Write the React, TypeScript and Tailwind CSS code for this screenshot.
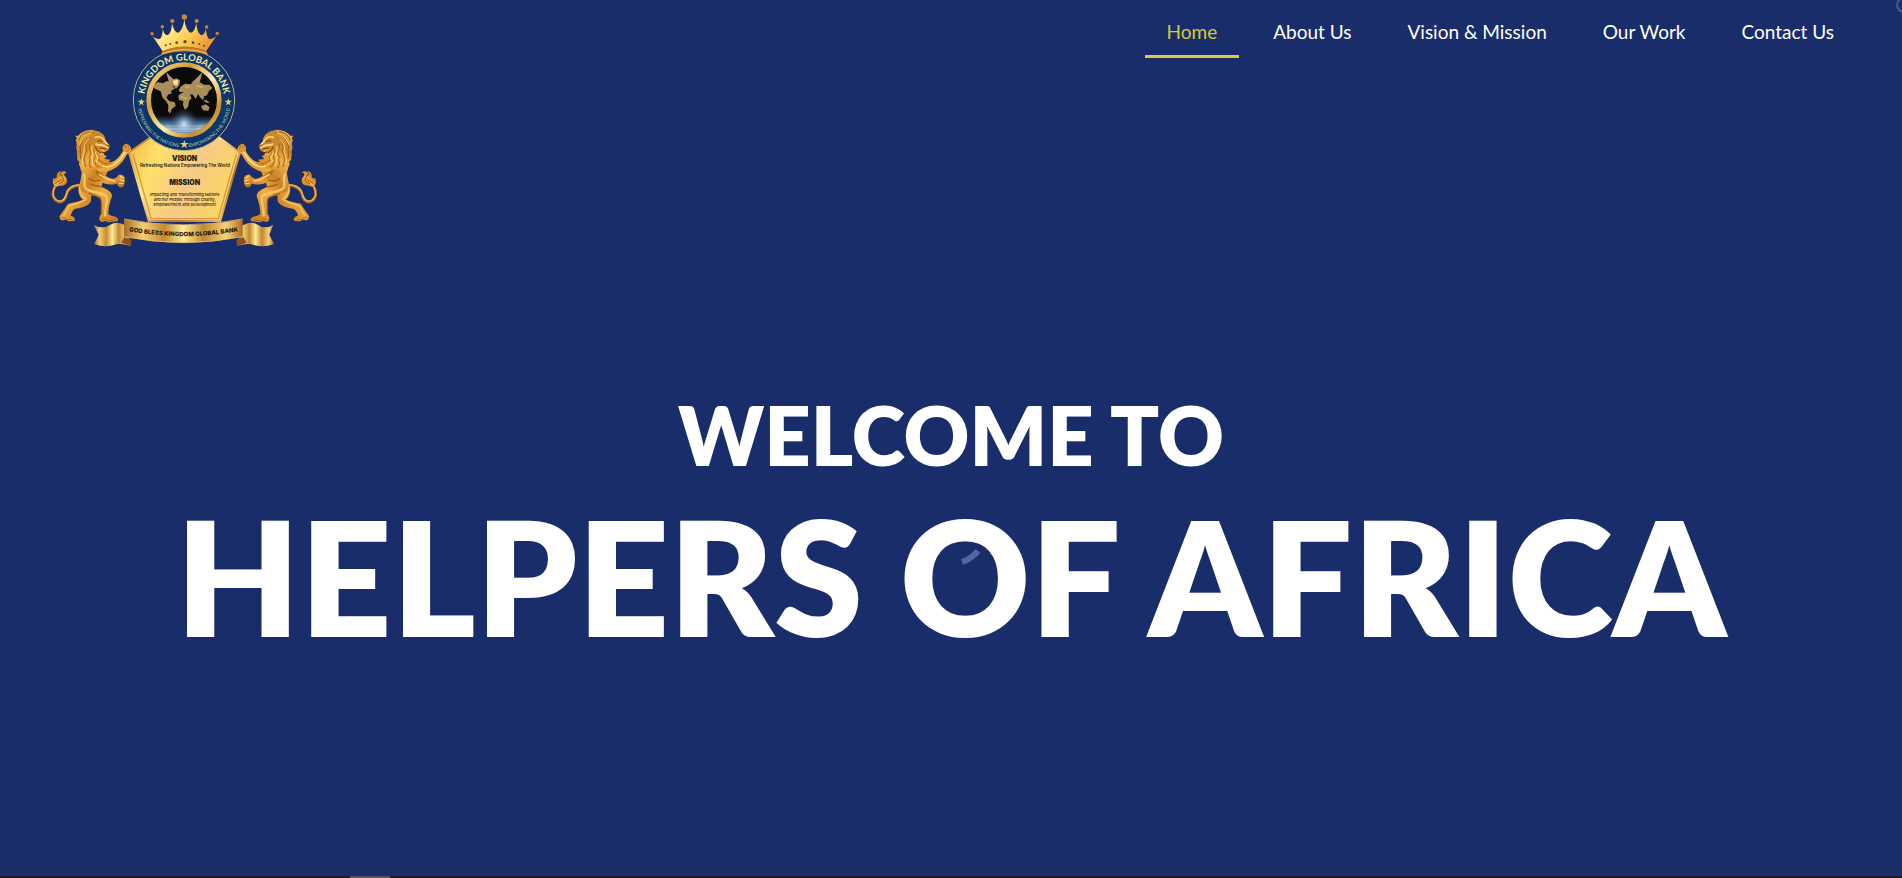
const links = ['Home', 'About Us', 'Vision & Mission', 'Our Work', 'Contact Us'];

function Lion() {
  return (
    <g strokeLinejoin="round" strokeLinecap="round">
      <path d="M108 196C82 196 68 207 64 226C60 244 46 250 35 243C20 233 22 215 29 201" fill="none" stroke="#b8721c" strokeWidth="8" />
      <path d="M108 194C82 194 67 206 63 225C58 242 46 247 35 240C22 231 23 214 29 201" fill="none" stroke="#eeb95f" strokeWidth="4" />
      <path d="M34 201C24 196 20 184 26 173C29 177 32 176 36 172C33 164 38 156 47 152L45 158C53 152 61 152 65 158C58 158 55 163 61 170C69 178 67 190 58 195C50 199 43 195 34 201Z" fill="url(#fur)" />
      <path d="M32 190C38 180 44 188 48 178M44 190C55 186 58 180 52 170M46 160C42 166 49 168 52 166" fill="none" stroke="#8e4d12" strokeWidth="3" />
      <path d="M104 190C96 210 101 228 113 239C99 246 81 248 69 251C61 262 55 274 48 282C40 289 44 301 54 301L64 299L70 304L88 303C93 296 86 288 77 287C79 278 84 271 89 267C110 265 132 257 138 244L140 205Z" fill="url(#furDark)" />
      <path d="M106 193C100 217 110 230 123 237M120 240C101 251 88 252 73 257C67 267 61 279 56 286" fill="none" stroke="#f7c868" strokeWidth="4" />
      <path d="M107 143C116 165 101 184 105 202C111 224 142 226 165 232C171 245 169 263 169 281C161 290 161 303 171 306L181 303L190 307L217 304C224 297 215 290 201 288L190 283C190 260 196 243 201 229C202 216 185 207 170 201C172 184 184 168 189 151L188 120L125 130Z" fill="url(#fur)" />
      <path d="M117 163C124 182 111 198 124 207C143 220 176 215 185 230C190 246 178 263 180 286" fill="none" stroke="#fbd576" strokeWidth="7" opacity=".75" />
      <path d="M132 176C146 188 157 180 167 181M139 193C151 199 160 197 169 201M132 220C151 225 158 230 166 234C172 246 168 264 169 281" fill="none" stroke="#a35c17" strokeWidth="4" />
      <path d="M150 151C166 155 181 169 196 175C206 179 213 174 218 169C222 160 232 164 238 170C241 182 240 195 232 202C224 204 218 198 216 191C197 196 180 194 167 184Z" fill="url(#furDark)" />
      <path d="M163 163C180 174 193 182 210 183M226 169L235 175M225 179L236 183M224 190L234 191" fill="none" stroke="#ffd16d" strokeWidth="4" />
      <path d="M160 124C178 133 194 129 208 123C220 115 228 103 234 92C230 81 236 70 246 71C257 76 261 87 256 94C249 98 245 105 240 113C231 129 219 140 204 148C187 159 169 158 157 151Z" fill="url(#fur)" />
      <path d="M171 136C191 146 211 133 223 121C231 112 236 104 241 94" fill="none" stroke="#ffdc83" strokeWidth="5" />
      <path d="M239 77L246 87M248 75L253 88M236 91C241 96 247 93 252 92" fill="none" stroke="#995315" strokeWidth="2" />
      <path d="M98 48C88 43 92 49 96 55C88 61 97 65 95 75C91 87 99 93 95 104C100 111 92 120 104 125C97 133 109 139 107 152L116 143C117 153 125 151 128 157C131 146 139 153 144 147C150 154 158 151 160 142C170 151 177 145 174 136C187 139 201 137 204 126L190 127L197 119L178 117L186 108C178 107 174 101 178 96C187 94 192 86 194 78L182 66C183 48 169 33 151 32C137 26 114 31 98 48Z" fill="url(#fur)" />
      <path d="M148 47C159 43 171 45 179 53L182 66L193 77C194 88 188 93 180 95L180 87L169 84L168 96C158 101 148 90 147 78L137 70C136 60 139 52 148 47Z" fill="#ca892f" />
      <path d="M151 52C162 48 173 53 178 62L190 76M153 72C161 79 171 72 181 79L188 82" fill="none" stroke="#ffd474" strokeWidth="5" />
      <path d="M158 64C163 60 169 62 172 66M185 75L193 79M167 84L181 87M170 96L181 99M151 80C155 87 156 94 167 98" fill="none" stroke="#643008" strokeWidth="3" />
      <path d="M133 35C110 39 107 48 101 60M146 37C124 43 114 56 105 80C109 91 103 99 107 116M137 53C119 69 119 77 126 91C121 104 112 111 122 140M134 73C129 90 146 97 132 112C140 122 127 128 137 143M147 87C143 101 158 106 145 121C155 127 148 139 160 140M156 98C161 110 168 104 160 122C176 124 169 131 188 132" fill="none" stroke="#a36018" strokeWidth="3" />
      <path d="M139 39C119 47 111 58 104 73M132 57C115 74 119 81 116 94C120 105 107 111 114 132M140 80C137 98 149 102 139 113C148 123 136 129 147 139M151 98C151 109 166 108 153 125C164 127 160 135 177 139" fill="none" stroke="#ffe08b" strokeWidth="3" opacity=".85" />
      <path d="M49 294L61 294M60 299L78 298M171 298L186 297M188 302L207 301" fill="none" stroke="#995316" strokeWidth="2" />
    </g>
  );
}

function Star({ at }: { at: string }) {
  return <path transform={at} d="M0-13L3-4L13-4L5 2L8 12L0 6L-8 12L-5 2L-13-4L-3-4Z" fill="#f3ca64" />;
}

function Crest() {
  return (
    <svg viewBox="0 0 870 780" className="block h-[260px] w-[290px]" role="img" aria-label="Kingdom Global Bank">
      <defs>
        <linearGradient id="fur" x1="0" y1="0" x2=".8" y2="1">
          <stop offset="0" stopColor="#f5c25a" />
          <stop offset=".35" stopColor="#c98224" />
          <stop offset=".6" stopColor="#f0ae42" />
          <stop offset="1" stopColor="#cf811f" />
        </linearGradient>
        <linearGradient id="furDark" x1="0" y1="0" x2="1" y2="1">
          <stop offset="0" stopColor="#9c5716" />
          <stop offset=".5" stopColor="#e5a23b" />
          <stop offset="1" stopColor="#ad661b" />
        </linearGradient>
        <linearGradient id="shield" x1="0" y1="0" x2="1" y2=".35">
          <stop offset="0" stopColor="#f2b744" />
          <stop offset=".3" stopColor="#ffe06a" />
          <stop offset=".65" stopColor="#f8c987" />
          <stop offset="1" stopColor="#fbd663" />
        </linearGradient>
        <linearGradient id="edge" x1="0" y1="0" x2="1" y2="1">
          <stop offset="0" stopColor="#c1711c" />
          <stop offset=".4" stopColor="#fff0a1" />
          <stop offset=".7" stopColor="#b96f2b" />
          <stop offset="1" stopColor="#f8d262" />
        </linearGradient>
        <linearGradient id="ring" x1="0" y1="0" x2="1" y2="1">
          <stop offset="0" stopColor="#fbe38a" />
          <stop offset=".3" stopColor="#d79b35" />
          <stop offset=".55" stopColor="#fff0b0" />
          <stop offset=".8" stopColor="#c98a30" />
          <stop offset="1" stopColor="#f8d876" />
        </linearGradient>
        <linearGradient id="band">
          <stop offset="0" stopColor="#a96a20" />
          <stop offset=".16" stopColor="#f3cf79" />
          <stop offset=".34" stopColor="#c58b2e" />
          <stop offset=".5" stopColor="#ffec98" />
          <stop offset=".67" stopColor="#c18830" />
          <stop offset=".86" stopColor="#f7d27b" />
          <stop offset="1" stopColor="#ad6b21" />
        </linearGradient>
        <linearGradient id="crown" x1="0" y1="0" x2="1" y2=".4">
          <stop offset="0" stopColor="#d99b2d" />
          <stop offset=".35" stopColor="#ffe88a" />
          <stop offset=".7" stopColor="#fbcb4c" />
          <stop offset="1" stopColor="#ec9a3a" />
        </linearGradient>
        <linearGradient id="sea" x1="0" y1="0" x2="0" y2="1">
          <stop offset="0" stopColor="#26394d" stopOpacity="0" />
          <stop offset=".4" stopColor="#3f6488" />
          <stop offset=".75" stopColor="#a9c6da" />
          <stop offset="1" stopColor="#6f93ae" />
        </linearGradient>
        <radialGradient id="glow">
          <stop offset="0" stopColor="#d8efff" stopOpacity=".9" />
          <stop offset=".4" stopColor="#7fa6c6" stopOpacity=".6" />
          <stop offset="1" stopColor="#20384f" stopOpacity="0" />
        </radialGradient>
        <clipPath id="globe"><circle cx="432" cy="300" r="100" /></clipPath>
        <path id="upper" d="M312 301A120 120 0 0 1 552 301" />
        <path id="lower" d="M292 302A140 140 0 0 0 572 302" />
      </defs>

      <path d="M267 458L342 405H527L600 458L541 663H326Z" fill="url(#shield)" stroke="url(#edge)" strokeWidth="6" />
      <path d="M279 463L333 654M589 463L535 654M330 656H537" stroke="#bc7935" strokeWidth="4" opacity=".65" />

      <circle cx="432" cy="300" r="152" fill="#0b376c" stroke="#b7bd91" strokeWidth="3" />
      <circle cx="432" cy="300" r="147" fill="none" stroke="#142f5d" strokeWidth="4" />
      <circle cx="432" cy="300" r="106" fill="#0b0a0b" stroke="url(#ring)" strokeWidth="14" />
      <g clipPath="url(#globe)">
        <rect x="332" y="345" width="200" height="56" fill="url(#sea)" />
        <ellipse cx="432" cy="372" rx="46" ry="48" fill="url(#glow)" />
        <path d="M350 378H514M362 387H502M376 394H488" stroke="#e4f3fb" strokeWidth="2" opacity=".5" />
        <path d="M378 216L412 250L392 263ZM488 216L454 250L474 263Z" fill="#ffc39b" opacity=".7" />
        <path d="M337 262L353 246L369 250L380 243L396 246L393 257L405 265L393 273L395 281L385 283L379 293L388 303L404 307L407 317L395 328L390 341L384 333L385 316L378 304L367 292L362 274L348 268ZM393 240L410 235L420 241L418 256L408 266L399 257ZM420 276L416 270L423 259L435 251L451 253L464 245L480 247L492 254L508 254L518 264L507 272L501 286L492 289L489 301L480 292L474 282L467 297L459 284L450 283L455 295L447 303L445 319L435 330L429 315L430 303L417 300L415 287L421 281L432 277ZM483 319L497 313L509 322L505 332L489 331ZM489 302L502 309L509 308L499 300Z" fill="#a88e5a" />
        <path d="M398 242L414 239L412 256L402 254Z" fill="#ffe69a" />
        <path d="M435 263L448 259M468 257L490 262M423 290L441 296" fill="none" stroke="#d9bd78" strokeWidth="5" opacity=".65" />
      </g>
      <text fill="#f4e7a0" fontSize="28" fontWeight="700" fontFamily="Lato, sans-serif" textAnchor="middle">
        <textPath href="#upper" startOffset="50%">KINGDOM GLOBAL BANK</textPath>
      </text>
      <text fill="#b9c9ac" fontSize="14" fontFamily="Lato, sans-serif" textAnchor="middle">
        <textPath href="#lower" startOffset="26%">REFRESHING THE NATIONS</textPath>
      </text>
      <text fill="#b9c9ac" fontSize="14" fontFamily="Lato, sans-serif" textAnchor="middle">
        <textPath href="#lower" startOffset="74%">EMPOWERING THE WORLD</textPath>
      </text>
      <Star at="translate(304 306) scale(.85)" />
      <Star at="translate(565 306) scale(.85)" />
      <Star at="translate(433 433)" />

      <path d="M335 104Q345 118 360 117Q368 108 368 86Q373 107 384 105Q395 98 396 70Q403 100 415 98Q429 90 433 58Q437 90 451 98Q463 100 469 70Q471 98 482 105Q493 107 498 86Q499 108 507 117Q521 118 532 104L498 154Q433 127 368 154Z" fill="url(#crown)" />
      <path d="M368 153Q433 127 498 153L505 166Q433 143 362 166Z" fill="#c37b2a" />
      <path d="M366 161Q433 137 502 160" fill="none" stroke="#f5ca68" strokeWidth="3" />
      <g fill="#c88b3c">
        <circle cx="336" cy="101" r="5" /><circle cx="367" cy="80" r="5" /><circle cx="397" cy="63" r="6" />
        <circle cx="433" cy="51" r="8" /><circle cx="470" cy="63" r="6" /><circle cx="500" cy="81" r="5" /><circle cx="532" cy="100" r="5" />
      </g>
      <g fill="#5e4930">
        <circle cx="377" cy="136" r="3" /><circle cx="391" cy="132" r="3" /><circle cx="410" cy="128" r="4" />
        <circle cx="435" cy="125" r="5" /><circle cx="459" cy="128" r="4" /><circle cx="478" cy="132" r="3" /><circle cx="492" cy="137" r="3" />
      </g>

      <g fill="#241a0c" fontFamily="Inter, sans-serif" textAnchor="middle">
        <text x="434" y="482" fontSize="21" fontWeight="900">VISION</text>
        <text x="435" y="502" fontSize="13" fontWeight="600">Refreshing Nations Empowering The World</text>
        <text x="434" y="555" fontSize="21" fontWeight="900">MISSION</text>
        <g fontSize="12" fontWeight="500">
          <text x="434" y="587">Impacting and Transforming Nations</text>
          <text x="434" y="602">and her People Through Charity,</text>
          <text x="434" y="617">Empowerment and Development</text>
        </g>
      </g>

      <g transform="translate(15 360)"><Lion /></g>
      <g transform="translate(851 360) scale(-1 1)"><Lion /></g>

      <path d="M161 674Q187 690 211 674Q231 661 256 676L273 738Q240 727 218 736Q190 743 163 732L176 704Z" fill="url(#band)" />
      <path d="M700 674Q676 690 653 674Q632 661 608 676L591 738Q623 727 645 736Q673 743 702 732L688 704Z" fill="url(#band)" />
      <path d="M253 711L274 719L273 738L244 728ZM610 711L589 719L591 738L620 728Z" fill="#8e5118" />
      <path d="M252 657Q432 692 608 657V710Q432 746 252 710Z" fill="url(#band)" />
      <path d="M252 657Q432 692 608 657M252 710Q432 746 608 710" fill="none" stroke="#efc466" strokeWidth="2" />
      <path id="ribbon" d="M254 691Q432 726 608 691" fill="none" />
      <text fill="#241704" fontSize="18" fontWeight="800" fontFamily="Inter, sans-serif" textAnchor="middle">
        <textPath href="#ribbon" startOffset="50%">GOD BLESS KINGDOM GLOBAL BANK</textPath>
      </text>
    </svg>
  );
}

export default function App() {
  return (
    <div className="relative flex min-h-screen flex-col overflow-hidden bg-[#1a2d6b] font-['Lato',sans-serif] text-white">
      <header className="flex items-start justify-between pr-[46px] pl-10">
        <a href="#home"><Crest /></a>
        <nav aria-label="Main" className="flex gap-3">
          {links.map((label, i) => (
            <a
              key={label}
              href="#home"
              aria-current={i === 0 ? 'page' : undefined}
              className={
                i === 0
                  ? 'border-b-3 border-[#d9cb44] px-[22px] pt-5 pb-[11px] text-[19px] leading-6 text-[#d6cb38]'
                  : 'border-b-3 border-transparent px-[22px] pt-5 pb-[11px] text-[19px] leading-6'
              }
            >
              {label}
            </a>
          ))}
        </nav>
      </header>

      <main className="flex grow flex-col items-center pt-[127px] text-center">
        <h1 className="font-extrabold whitespace-nowrap">
          <span className="block text-[81px] leading-24">WELCOME TO</span>
          <span className="block text-[160px] leading-[184px]">HELPERS OF AFRICA</span>
        </h1>
      </main>

      <svg viewBox="0 0 20 18" className="absolute top-[548px] left-[961px] h-[18px] w-5" aria-hidden="true">
        <path d="M1 14Q10 11 17 3" fill="none" stroke="#5265a5" strokeWidth="6" />
      </svg>
      <svg viewBox="0 0 6 16" className="absolute top-0 right-0 h-4 w-1.5" aria-hidden="true">
        <circle cx="8" cy="5" r="7" fill="none" stroke="#465a9b" strokeWidth="2" />
      </svg>
      <footer className="h-0.5 bg-[#1b1c24]">
        <div className="ml-[350px] h-0.5 w-10 bg-[#55565c]" />
      </footer>
    </div>
  );
}
